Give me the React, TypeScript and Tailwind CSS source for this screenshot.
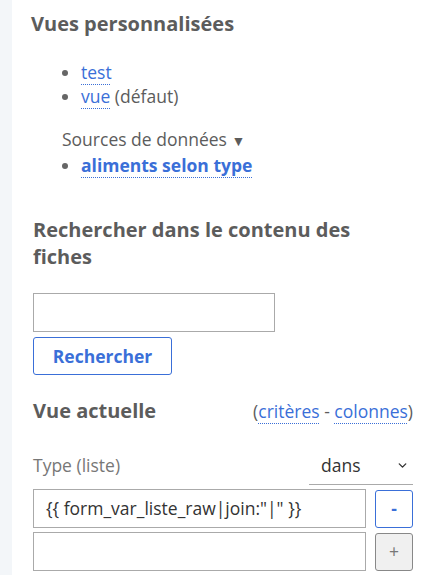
import { ChevronDown } from 'lucide-react'

const font = { fontFamily: '"Open Sans", "Noto Sans", sans-serif' }

function Link({ children, bold = false }: { children: React.ReactNode; bold?: boolean }) {
    return (
        <a
            href="#"
            className={`text-[#3a6fd8] underline decoration-dotted decoration-1 decoration-[#3a6fd8] underline-offset-[5px] ${bold ? 'font-bold' : ''}`}
        >
            {children}
        </a>
    )
}

export default function App() {
    return (
        <div className="flex h-[575px] w-[432px] overflow-hidden bg-white text-[17.5px] text-[#5c5c5c]" style={font}>
            <div className="w-[12px] shrink-0 bg-[#f3f6f9]" />
            <div className="flex-1 pl-[19px] pr-[19px]">
                {/* Vues personnalisées */}
                <h2 className="mt-[10px] text-[20px] leading-[28px] font-bold">Vues personnalisées</h2>
                <ul className="mt-[22px] list-disc pl-[50px] leading-[24px] marker:text-[#666]">
                    <li><Link>test</Link></li>
                    <li><Link>vue</Link> (défaut)</li>
                </ul>
                <div className="mt-[19px] pl-[31px] leading-[25px]">
                    Sources de données <span className="text-[14px]">▼</span>
                </div>
                <ul className="list-disc pl-[50px] leading-[25px] marker:text-[#666]">
                    <li><Link bold>aliments selon type</Link></li>
                </ul>

                {/* Recherche */}
                <h2 className="mt-[38px] pr-[30px] pl-[2px] text-[20px] leading-[27px] font-bold">
                    Rechercher dans le contenu des fiches
                </h2>
                <div className="mt-[23px] pl-[2px]">
                    <input className="block h-[39px] w-[242px] border border-[#aaa] px-2 outline-none" />
                    <button className="mt-[5px] h-[38px] w-[139px] rounded-[3px] border border-[#3a6fd8] font-bold text-[#3a6fd8]">
                        Rechercher
                    </button>
                </div>

                {/* Vue actuelle */}
                <div className="mt-[22px] flex items-baseline justify-between pl-[2px]">
                    <h2 className="text-[20px] leading-[28px] font-bold">Vue actuelle</h2>
                    <span>
                        (<Link>critères</Link> - <Link>colonnes</Link>)
                    </span>
                </div>
                <div className="mt-[22px] flex items-end justify-between pl-[2px]">
                    <span className="pb-[7px] text-[#777]">Type (liste)</span>
                    <div className="flex h-[38px] w-[104px] items-center justify-between border-b border-[#aaa] pr-[4px] pl-[12px] text-[#333]">
                        <span>dans</span>
                        <ChevronDown size={13} strokeWidth={2.5} />
                    </div>
                </div>
                <div className="mt-[4px] flex flex-col gap-[4px] pl-[2px]">
                    <div className="flex items-center gap-[9px]">
                        <div className="flex h-[39px] w-[333px] items-center border border-[#aaa] pl-[12px] text-[#333]">
                            {'{{ form_var_liste_raw|join:"|" }}'}
                        </div>
                        <button className="h-[38px] w-[38px] rounded-[3px] border border-[#3a6fd8] font-bold text-[#3a6fd8]">-</button>
                    </div>
                    <div className="flex items-center gap-[9px]">
                        <div className="h-[39px] w-[333px] border border-[#aaa]" />
                        <button className="h-[38px] w-[38px] rounded-[3px] border border-[#888] bg-[#f0f0f0] text-[#777]">+</button>
                    </div>
                </div>
            </div>
        </div>
    )
}
